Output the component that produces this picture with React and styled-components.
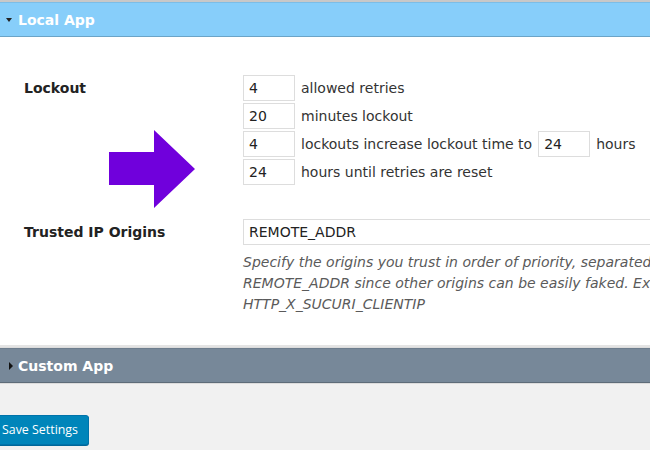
import React from 'react';
import styled, { createGlobalStyle } from 'styled-components';

const GlobalStyle = createGlobalStyle`
  html, body {
    margin: 0;
    padding: 0;
    overflow: hidden;
    background: #f1f1f1;
    font-family: "DejaVu Sans", Verdana, sans-serif;
  }
`;

const lockoutRows = [
  { value: '4', text: 'allowed retries' },
  { value: '20', text: 'minutes lockout' },
  { value: '4', text: 'lockouts increase lockout time to', extra: '24', after: 'hours' },
  { value: '24', text: 'hours until retries are reset' },
];

const App = () => {
  return (
    <Page>
      <GlobalStyle />
      <Section>
        <SectionHeader $bg="#87cefa">
          <Caret $open />
          Local App
        </SectionHeader>
        <Panel>
          <FormRow $top={38}>
            <Label>Lockout</Label>
            <Fields>
              {lockoutRows.map((row, i) => (
                <FieldLine key={i}>
                  <SmallInput defaultValue={row.value} />
                  <FieldText>{row.text}</FieldText>
                  {row.extra && (
                    <>
                      <SmallInput defaultValue={row.extra} />
                      <FieldText>{row.after}</FieldText>
                    </>
                  )}
                </FieldLine>
              ))}
            </Fields>
            <Arrow viewBox="0 0 86 78" aria-hidden="true">
              <polygon points="0,22 45,22 45,0 86,39 45,78 45,55 0,55" fill="#7000dc" />
            </Arrow>
          </FormRow>
          <FormRow $top={34}>
            <Label>Trusted IP Origins</Label>
            <Fields>
              <WideInput defaultValue="REMOTE_ADDR" />
              <Description>
                <span>Specify the origins you trust in order of priority, separated by commas. We strongly recommend that you do not use anything other than</span>
                <span>REMOTE_ADDR since other origins can be easily faked. Examples: HTTP_X_FORWARDED_FOR, HTTP_CF_CONNECTING_IP,</span>
                <span>HTTP_X_SUCURI_CLIENTIP</span>
              </Description>
            </Fields>
          </FormRow>
        </Panel>
      </Section>
      <Section>
        <SectionHeader $bg="#778899">
          <Caret />
          Custom App
        </SectionHeader>
      </Section>
      <Footer>
        <SaveButton>Save Settings</SaveButton>
      </Footer>
    </Page>
  );
};

export default App;

const Page = styled.div`
  width: 650px;
  height: 450px;
  overflow: hidden;
  border-top: 2px solid #c8c8c8;
  box-sizing: border-box;
`;

const Section = styled.section`
  border-bottom: 1px solid #dcdcdc;
`;

const SectionHeader = styled.h3`
  margin: 0;
  height: 33px;
  display: flex;
  align-items: center;
  padding-left: 6px;
  background: ${(p) => p.$bg};
  border-top: 1px solid rgba(0, 0, 0, 0.08);
  border-bottom: 1px solid rgba(0, 0, 0, 0.2);
  color: #fff;
  font-size: 14px;
  font-weight: bold;
`;

const Caret = styled.span`
  display: inline-block;
  width: 0;
  height: 0;
  margin-right: 6px;
  ${(p) =>
    p.$open
      ? `border-left: 3.5px solid transparent;
         border-right: 3.5px solid transparent;
         border-top: 4px solid #222;
         margin-left: 0;`
      : `border-top: 4px solid transparent;
         border-bottom: 4px solid transparent;
         border-left: 4px solid #111;
         margin-left: 3px;
         margin-right: 5px;`}
`;

const Panel = styled.div`
  background: #fff;
  padding-bottom: 30px;
  border-bottom: 2px solid #e4e4e4;
`;

const FormRow = styled.div`
  position: relative;
  display: grid;
  grid-template-columns: 243px 1fr;
  padding-top: ${(p) => p.$top}px;
`;

const Label = styled.div`
  padding-left: 24px;
  padding-top: 5px;
  font-size: 14px;
  font-weight: bold;
  color: #222;
`;

const Fields = styled.div`
  display: flex;
  flex-direction: column;
  gap: 2px;
  min-width: 0;
`;

const FieldLine = styled.div`
  display: flex;
  align-items: center;
  gap: 6px;
  white-space: nowrap;
`;

const SmallInput = styled.input`
  width: 52px;
  height: 26px;
  box-sizing: border-box;
  border: 1px solid #ddd;
  background: #fff;
  padding: 0 5px;
  font-family: inherit;
  font-size: 14px;
  color: #222;
  outline: none;
`;

const FieldText = styled.span`
  font-size: 14px;
  color: #333;
`;

const WideInput = styled(SmallInput)`
  width: 450px;
`;

const Description = styled.p`
  margin: 5px 0 0;
  display: flex;
  flex-direction: column;
  font-size: 14px;
  line-height: 21px;
  font-style: italic;
  color: #5a5a5a;
  white-space: nowrap;
`;

const Arrow = styled.svg`
  position: absolute;
  left: 109px;
  top: 93px;
  width: 86px;
  height: 78px;
`;

const Footer = styled.div`
  padding-top: 31px;
`;

const SaveButton = styled.button`
  margin-left: -9px;
  height: 30px;
  padding: 0 10px 1px 10px;
  background: #0085ba;
  border: 1px solid #0073aa;
  border-radius: 3px;
  box-shadow: 0 1px 0 #006799;
  color: #fff;
  font-family: "Open Sans", sans-serif;
  font-size: 12.4px;
  cursor: pointer;
`;
